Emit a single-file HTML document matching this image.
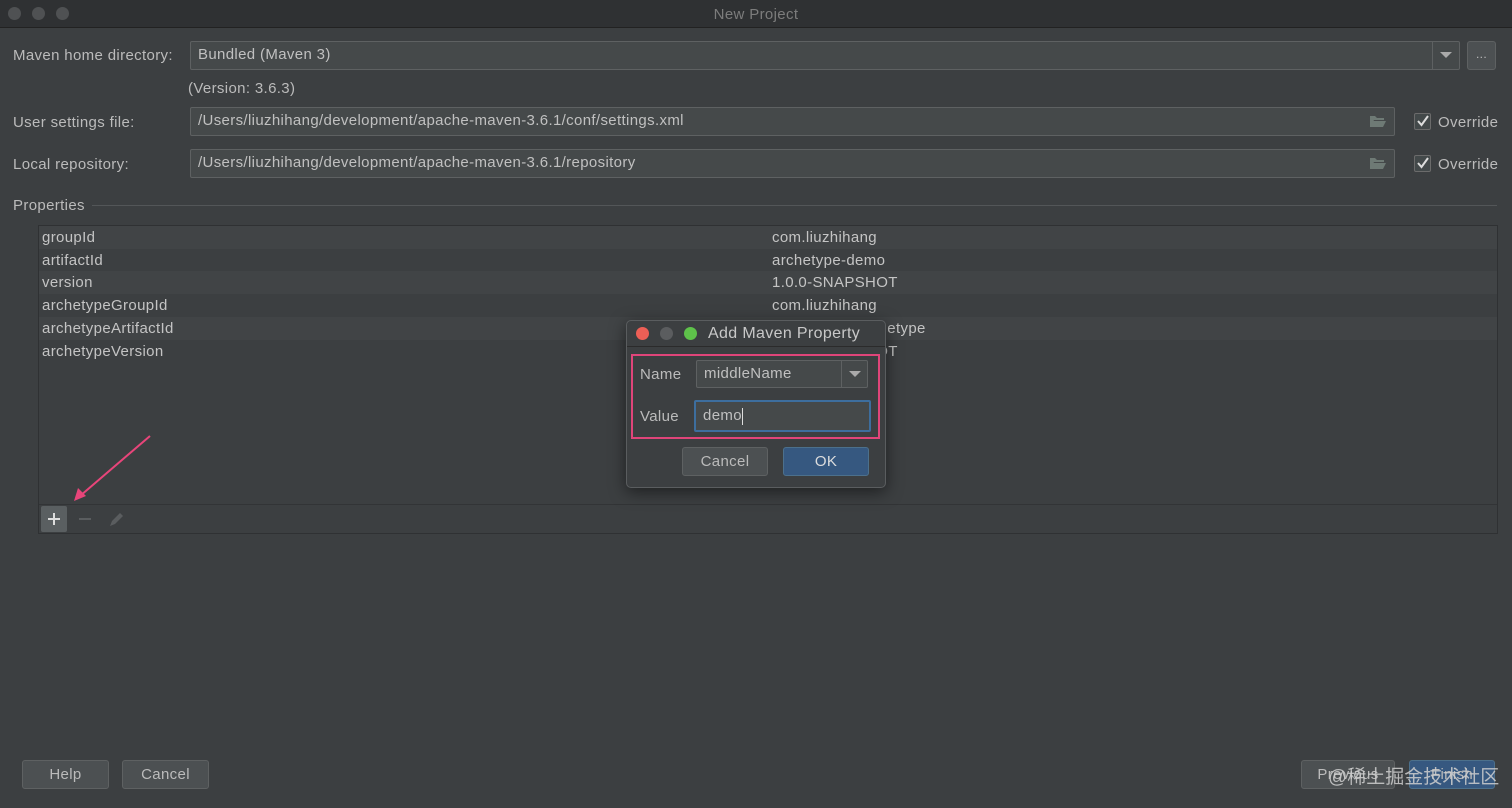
<!DOCTYPE html>
<html><head><meta charset="utf-8"><style>
*{box-sizing:border-box;margin:0;padding:0}
body{width:1512px;height:808px;background:#3c3f41;font-family:"Liberation Sans","Noto Sans CJK SC",sans-serif;color:#bbbbbb;font-size:15px;letter-spacing:.35px;position:relative;overflow:hidden}
.a{position:absolute}
.field{position:absolute;background:#45494a;border:1px solid #5e6162;border-radius:2px;padding-left:7px;line-height:26px;color:#c0c0c0;white-space:nowrap}
.lbl{position:absolute;font-size:15px;color:#bbb;white-space:nowrap}
.btn{position:absolute;background:#4c5052;border:1px solid #5e6162;border-radius:3px;text-align:center;color:#bbb;font-size:15px}
.row{position:absolute;left:39px;width:1458px;height:23px;line-height:23px;padding-left:3px;font-size:15px;color:#c4c4c4;white-space:nowrap}
.cb{position:absolute;width:17px;height:17px;border:1px solid #6b6b6b;border-radius:2px;background:#43494a}
</style></head><body>
<div class="a" style="left:0;top:0;width:1512px;height:28px;background:#2f3133;border-bottom:1px solid #222"></div>
<div class="a" style="left:8px;top:7px;width:13px;height:13px;border-radius:50%;background:#4f5153"></div>
<div class="a" style="left:32px;top:7px;width:13px;height:13px;border-radius:50%;background:#4f5153"></div>
<div class="a" style="left:56px;top:7px;width:13px;height:13px;border-radius:50%;background:#4f5153"></div>
<div class="a" style="left:0;top:6px;width:1512px;text-align:center;color:#7c7c7c;font-size:15px">New Project</div>

<div class="lbl" style="left:13px;top:47px">Maven home directory:</div>
<div class="field" style="left:190px;top:41px;width:1270px;height:29px">Bundled (Maven 3)</div>
<div class="a" style="left:1432px;top:42px;width:1px;height:27px;background:#5e6162"></div>
<svg class="a" style="left:1439px;top:51px" width="14" height="8"><path d="M1 1h12L7 7z" fill="#aaa"/></svg>
<div class="btn" style="left:1467px;top:41px;width:29px;height:29px;line-height:24px;font-size:12px">...</div>
<div class="lbl" style="left:188px;top:80px">(Version: 3.6.3)</div>

<div class="lbl" style="left:13px;top:114px">User settings file:</div>
<div class="field" style="left:190px;top:107px;width:1205px;height:29px">/Users/liuzhihang/development/apache-maven-3.6.1/conf/settings.xml</div>
<svg class="a" style="left:1369px;top:114px" width="18" height="14"><path d="M1 2h5l2 2h7v2H5L1 13z M4 7h13l-3 6H1z" fill="#6e7a75"/></svg>
<div class="cb" style="left:1414px;top:113px"></div>
<svg class="a" style="left:1416px;top:114px" width="14" height="14"><path d="M2 7l3.5 4L12 2" stroke="#ddd" stroke-width="2" fill="none"/></svg>
<div class="lbl" style="left:1438px;top:114px">Override</div>

<div class="lbl" style="left:13px;top:156px">Local repository:</div>
<div class="field" style="left:190px;top:149px;width:1205px;height:29px">/Users/liuzhihang/development/apache-maven-3.6.1/repository</div>
<svg class="a" style="left:1369px;top:156px" width="18" height="14"><path d="M1 2h5l2 2h7v2H5L1 13z M4 7h13l-3 6H1z" fill="#6e7a75"/></svg>
<div class="cb" style="left:1414px;top:155px"></div>
<svg class="a" style="left:1416px;top:156px" width="14" height="14"><path d="M2 7l3.5 4L12 2" stroke="#ddd" stroke-width="2" fill="none"/></svg>
<div class="lbl" style="left:1438px;top:156px">Override</div>

<div class="lbl" style="left:13px;top:197px">Properties</div>
<div class="a" style="left:92px;top:205px;width:1405px;height:1px;background:#535658"></div>

<div class="a" style="left:38px;top:225px;width:1460px;height:309px;border:1px solid #2f3133;background:#3c3f41"></div>
<div class="row" style="top:226px;background:#414446">groupId<span class="a" style="left:733px">com.liuzhihang</span></div>
<div class="row" style="top:249px;background:#3c3f41">artifactId<span class="a" style="left:733px">archetype-demo</span></div>
<div class="row" style="top:271px;background:#414446">version<span class="a" style="left:733px">1.0.0-SNAPSHOT</span></div>
<div class="row" style="top:294px;background:#3c3f41">archetypeGroupId<span class="a" style="left:733px">com.liuzhihang</span></div>
<div class="row" style="top:317px;background:#414446">archetypeArtifactId<span class="a" style="left:733px">xxxxxxxxxe-archetype</span></div>
<div class="row" style="top:340px;background:#3c3f41">archetypeVersion<span class="a" style="left:733px">1.0.0-SNAPSHOT</span></div>
<div class="a" style="left:39px;top:504px;width:1458px;height:1px;background:#323436"></div>
<div class="a" style="left:41px;top:506px;width:26px;height:26px;background:#5a5f61;border-radius:2px"></div>
<svg class="a" style="left:41px;top:506px" width="26" height="26"><path d="M13 7v12M7 13h12" stroke="#ddd" stroke-width="2"/></svg>
<svg class="a" style="left:76px;top:506px" width="20" height="26"><path d="M3 13h12" stroke="#5a5d5f" stroke-width="2"/></svg>
<svg class="a" style="left:106px;top:508px" width="22" height="22"><path d="M4 18l2-5 8-8 3 3-8 8z" fill="#5a5d5f"/></svg>
<svg class="a" style="left:70px;top:430px" width="85" height="75"><path d="M80 6L10 66" stroke="#e8457a" stroke-width="2"/><path d="M4 71l4-13 8 8z" fill="#e8457a"/></svg>

<!-- dialog -->
<div class="a" style="left:626px;top:320px;width:260px;height:168px;background:#3c3f41;border:1px solid #5a5d5f;border-radius:5px;box-shadow:0 4px 16px rgba(0,0,0,.5)"></div>
<div class="a" style="left:627px;top:321px;width:258px;height:26px;border-bottom:1px solid #2b2b2b"></div>
<div class="a" style="left:636px;top:327px;width:13px;height:13px;border-radius:50%;background:#ed5f56"></div>
<div class="a" style="left:660px;top:327px;width:13px;height:13px;border-radius:50%;background:#5b5d5f"></div>
<div class="a" style="left:684px;top:327px;width:13px;height:13px;border-radius:50%;background:#5ec24a"></div>
<div class="a" style="left:708px;top:325px;font-size:16px;color:#c8c8c8">Add Maven Property</div>
<div class="a" style="left:631px;top:354px;width:249px;height:85px;border:2px solid #e0457a"></div>
<div class="lbl" style="left:640px;top:366px">Name</div>
<div class="field" style="left:696px;top:360px;width:172px;height:28px;line-height:26px">middleName</div>
<div class="a" style="left:841px;top:361px;width:1px;height:26px;background:#5e6162"></div>
<svg class="a" style="left:848px;top:370px" width="14" height="8"><path d="M1 1h12L7 7z" fill="#aaa"/></svg>
<div class="lbl" style="left:640px;top:408px">Value</div>
<div class="field" style="left:694px;top:400px;width:177px;height:32px;border:2px solid #3d6e9e;line-height:28px">demo<span style="display:inline-block;width:1px;height:17px;background:#ddd;vertical-align:middle"></span></div>
<div class="btn" style="left:682px;top:447px;width:86px;height:29px;line-height:27px">Cancel</div>
<div class="btn" style="left:783px;top:447px;width:86px;height:29px;line-height:27px;background:#365880;border-color:#4c708c;color:#ddd">OK</div>

<div class="btn" style="left:22px;top:760px;width:87px;height:29px;line-height:27px">Help</div>
<div class="btn" style="left:122px;top:760px;width:87px;height:29px;line-height:27px">Cancel</div>
<div class="btn" style="left:1301px;top:760px;width:94px;height:29px;line-height:27px">Previous</div>
<div class="btn" style="left:1409px;top:760px;width:86px;height:29px;line-height:27px;background:#365880;border-color:#4c708c">Finish</div>
<div class="a" style="left:1328px;top:762px;font-size:19px;letter-spacing:0;color:#cfcfcf;opacity:.85">@稀土掘金技术社区</div>
</body></html>
